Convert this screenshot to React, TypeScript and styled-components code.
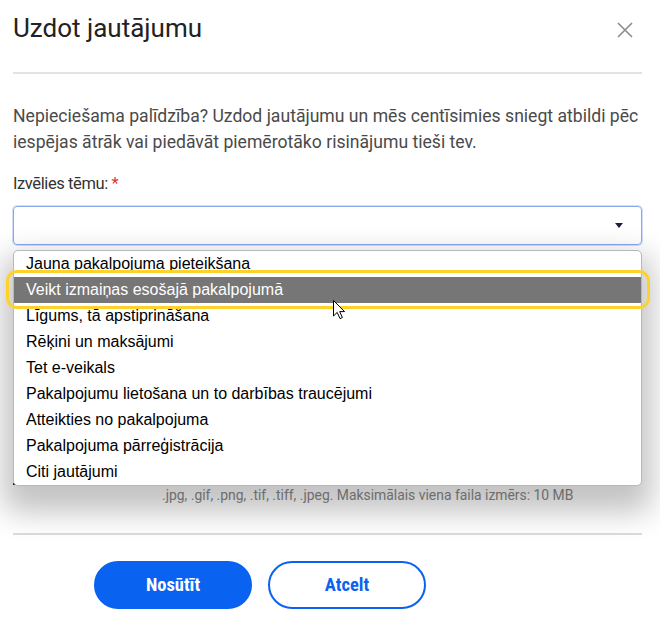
import React from "react";
import styled, { createGlobalStyle } from "styled-components";

const GlobalStyle = createGlobalStyle`
  html, body { margin: 0; padding: 0; background: #ffffff; }
  body { font-family: Roboto, "Noto Sans", Arial, sans-serif; }
  * { box-sizing: border-box; }
`;

const Dialog = styled.div`
  width: 660px;
  height: 644px;
  padding: 0 18px 0 13px;
  overflow: hidden;
`;

const Header = styled.div`
  display: flex;
  justify-content: space-between;
  align-items: flex-start;
  height: 74px;
  padding-top: 13px;
  border-bottom: 2px solid #e3e3e3;
`;

const Title = styled.h2`
  margin: 0;
  font-size: 26px;
  line-height: 30px;
  font-weight: 400;
  color: #222;
`;

const CloseButton = styled.button`
  border: 0;
  background: none;
  padding: 0;
  margin: 9px 9px 0 0;
  width: 16px;
  height: 16px;
  display: flex;
  cursor: pointer;
`;

const Intro = styled.p`
  margin: 29px 0 0;
  font-size: 17.6px;
  line-height: 26px;
  color: #4a4a4a;
`;

const Label = styled.div`
  margin-top: 17px;
  font-size: 16.5px;
  letter-spacing: -0.4px;
  line-height: 24px;
  color: #333;
`;

const Required = styled.span`
  color: #e5322d;
`;

const Field = styled.div`
  position: relative;
  margin-top: 10px;
`;

const SelectBox = styled.div`
  height: 39px;
  border: 1px solid #86a9f2;
  border-radius: 4px;
  box-shadow: 0 0 0 1px rgba(120, 160, 245, 0.35);
  display: flex;
  align-items: center;
  justify-content: flex-end;
  padding-right: 18px;
`;

const Caret = styled.span`
  width: 0;
  height: 0;
  border-left: 4px solid transparent;
  border-right: 4px solid transparent;
  border-top: 5px solid #1b1f45;
`;

const OptionList = styled.ul`
  position: absolute;
  z-index: 5;
  left: 0;
  right: 0;
  top: calc(100% + 5px);
  margin: 0;
  padding: 0;
  list-style: none;
  background: #fff;
  border: 1px solid #b8b8b8;
  border-radius: 5px;
  box-shadow: 0 16px 30px 10px rgba(0, 0, 0, 0.24);
  overflow: hidden;
  font-family: "Liberation Sans", Arial, sans-serif;
`;

const Option = styled.li<{ $active?: boolean }>`
  height: 26px;
  line-height: 26px;
  padding-left: 12px;
  font-size: 16px;
  color: ${(p) => (p.$active ? "#ffffff" : "#000000")};
  background: ${(p) => (p.$active ? "#767676" : "transparent")};
  white-space: nowrap;
`;

const Highlight = styled.div`
  position: absolute;
  z-index: 6;
  left: -7px;
  width: 644px;
  top: 64px;
  height: 39px;
  border: 3px solid #fdd22c;
  border-radius: 11px;
  pointer-events: none;
`;

const Pointer = styled.svg`
  position: absolute;
  z-index: 7;
  left: 320px;
  top: 94px;
`;

const TextArea = styled.div`
  margin-top: 20px;
  height: 165px;
  border: 1px solid #8a8fb0;
  border-radius: 4px;
`;

const UploadRow = styled.div`
  display: flex;
  margin-top: 15px;
`;

const UploadButton = styled.div`
  width: 109px;
  height: 40px;
  border-bottom: 2px solid #1d2b4f;
`;

const Hint = styled.div`
  margin-top: 2px;
  padding-left: 149px;
  font-size: 13.9px;
  line-height: 16px;
  color: #8a8a8a;
  white-space: nowrap;
`;

const Footer = styled.div`
  margin-top: 30px;
  border-top: 2px solid #dcdcdc;
  padding: 26px 0 0 81px;
  display: flex;
  gap: 16px;
`;

const Button = styled.button<{ $primary?: boolean }>`
  width: 158px;
  height: 48px;
  border-radius: 24px;
  border: 2px solid #0a62f0;
  background: ${(p) => (p.$primary ? "#0a62f0" : "#ffffff")};
  color: ${(p) => (p.$primary ? "#ffffff" : "#0a62f0")};
  font-family: "Liberation Sans Narrow", "Roboto Condensed", Roboto, sans-serif;
  font-weight: 700;
  font-size: 18.5px;
  cursor: pointer;
`;

const options = [
  "Jauna pakalpojuma pieteikšana",
  "Veikt izmaiņas esošajā pakalpojumā",
  "Līgums, tā apstiprināšana",
  "Rēķini un maksājumi",
  "Tet e-veikals",
  "Pakalpojumu lietošana un to darbības traucējumi",
  "Atteikties no pakalpojuma",
  "Pakalpojuma pārreģistrācija",
  "Citi jautājumi",
];

export default function App() {
  return (
    <>
      <GlobalStyle />
      <Dialog>
        <Header>
          <Title>Uzdot jautājumu</Title>
          <CloseButton aria-label="Aizvērt">
            <svg width="16" height="16" viewBox="0 0 16 16">
              <path d="M1 1 L15 15 M15 1 L1 15" stroke="#8c8c8c" strokeWidth="1.6" fill="none" />
            </svg>
          </CloseButton>
        </Header>
        <Intro>
          Nepieciešama palīdzība? Uzdod jautājumu un mēs centīsimies sniegt atbildi pēc iespējas ātrāk vai
          piedāvāt piemērotāko risinājumu tieši tev.
        </Intro>
        <Label>
          Izvēlies tēmu: <Required>*</Required>
        </Label>
        <Field>
          <SelectBox>
            <Caret />
          </SelectBox>
          <OptionList>
            {options.map((o, i) => (
              <Option key={o} $active={i === 1}>
                {o}
              </Option>
            ))}
          </OptionList>
          <Highlight />
          <Pointer width="14" height="20" viewBox="0 0 14 20">
            <path
              d="M0.5 0.5 L0.5 16 L4.2 12.4 L7 18.6 L9.4 17.6 L6.7 11.6 L11.6 11.6 Z"
              fill="#ffffff"
              stroke="#000000"
              strokeWidth="1"
              strokeLinejoin="round"
            />
          </Pointer>
        </Field>
        <TextArea />
        <UploadRow>
          <UploadButton />
        </UploadRow>
        <Hint>.jpg, .gif, .png, .tif, .tiff, .jpeg. Maksimālais viena faila izmērs: 10 MB</Hint>
        <Footer>
          <Button $primary>Nosūtīt</Button>
          <Button>Atcelt</Button>
        </Footer>
      </Dialog>
    </>
  );
}
